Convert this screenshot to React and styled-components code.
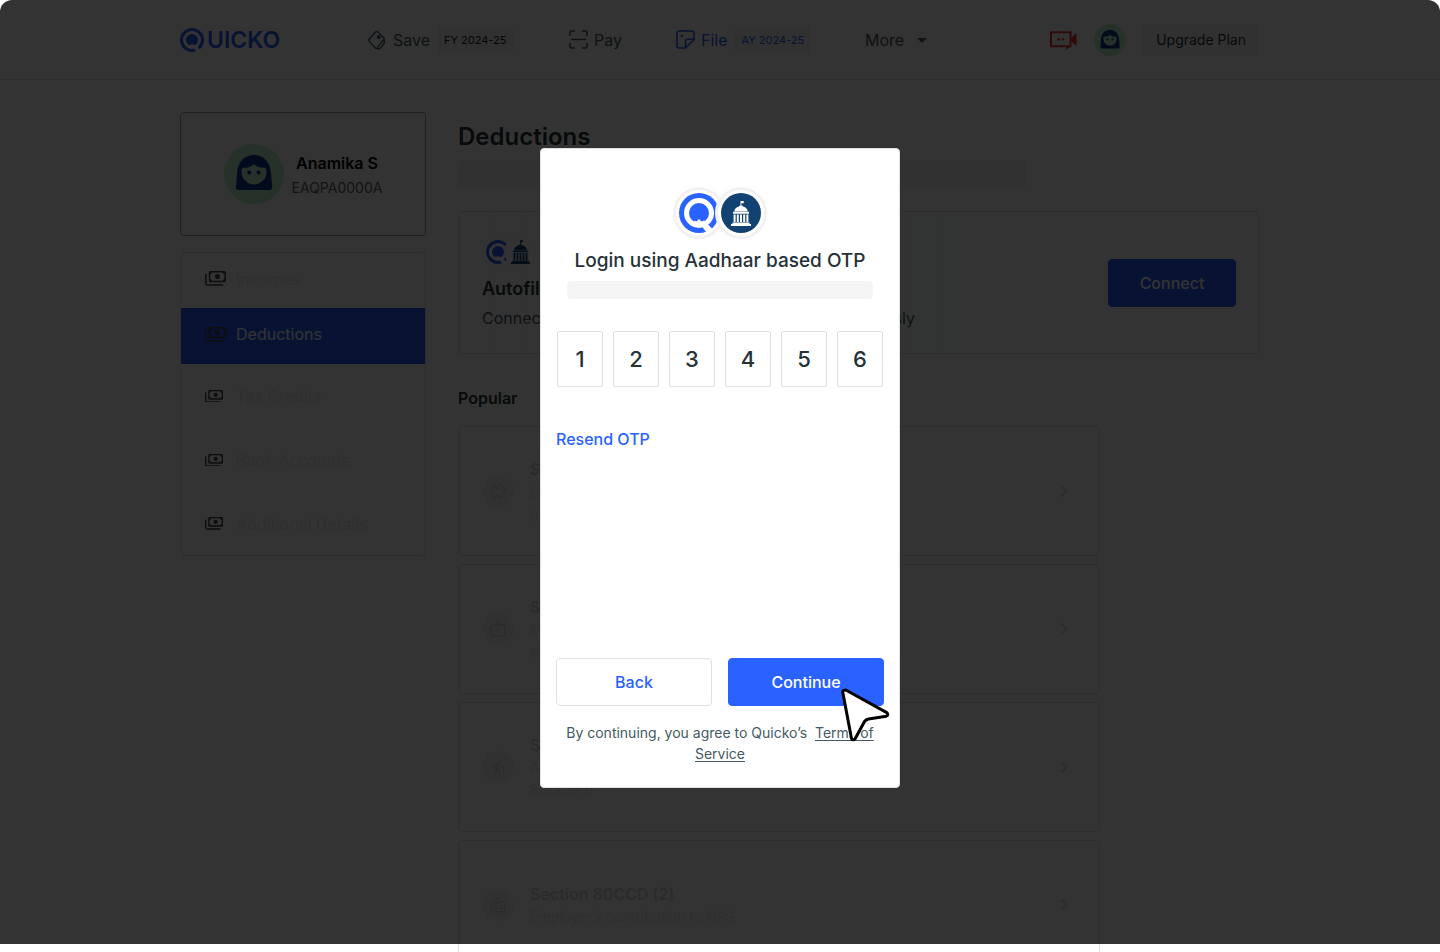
import styled, { createGlobalStyle } from "styled-components";
import {
  MdArrowDropDown,
  MdChevronRight,
  MdElderly,
  MdOutlineBadge,
  MdOutlineMedicalServices,
  MdOutlineSavings,
} from "react-icons/md";

const GlobalStyle = createGlobalStyle`
  *, *::before, *::after {
    box-sizing: border-box;
  }

  body {
    margin: 0;
    height: 100vh;
    overflow: hidden;
    background: #ffffff;
    color: #263238;
    font-family: Inter, "Liberation Sans", sans-serif;
    font-size: 16px;
    line-height: 24px;
  }

  button, input {
    font: inherit;
    margin: 0;
  }

  a {
    color: inherit;
    text-decoration: none;
  }

  h1, h2, h3, p, ul {
    margin: 0;
    padding: 0;
  }

  svg {
    display: block;
    flex-shrink: 0;
  }
`;

/* ---------- header ---------- */

const Header = styled.header`
  height: 80px;
  border-bottom: 1px solid #e0e0e0;
`;

const HeaderInner = styled.div`
  display: flex;
  align-items: center;
  max-width: 1080px;
  height: 100%;
  margin: 0 auto;
`;

const Logo = styled.a`
  display: flex;
  align-items: center;
  gap: 3px;
  width: 187px;
  color: #2962ff;
  font-size: 23px;
  font-weight: 600;
`;

const Nav = styled.nav`
  display: grid;
  grid-template-columns: 202px 107px 189px auto;
  margin-right: auto;
`;

const NavLink = styled.a`
  display: flex;
  align-items: center;
  gap: 6px;
  color: ${({ $active }) => ($active ? "#2962ff" : "#455a64")};
`;

const YearTag = styled.span`
  padding: 0 8px;
  border-radius: 4px;
  background: #f5f5f5;
  color: ${({ $active }) => ($active ? "#2962ff" : "#212121")};
  font-size: 11px;
`;

const HeaderActions = styled.div`
  display: flex;
  align-items: center;
  gap: 16px;
`;

const UpgradeButton = styled.button`
  height: 32px;
  padding: 0 14px;
  border: 0;
  border-radius: 4px;
  background: #f5f5f5;
  color: #263238;
  font-size: 14px;
`;

/* ---------- page ---------- */

const Page = styled.div`
  display: grid;
  grid-template-columns: 246px 1fr;
  align-items: start;
  gap: 32px;
  max-width: 1080px;
  margin: 0 auto;
  padding-top: 32px;
`;

const Sidebar = styled.aside`
  display: grid;
  gap: 16px;
`;

const ProfileCard = styled.section`
  display: flex;
  align-items: center;
  justify-content: center;
  gap: 8px;
  height: 124px;
  border: 1px solid #9e9e9e;
  border-radius: 4px;
  text-align: center;
`;

const ProfileName = styled.p`
  padding-top: 4px;
  color: #000000;
  font-weight: 600;
`;

const ProfilePan = styled.p`
  color: #616161;
  font-size: 14px;
  line-height: 26px;
`;

const Menu = styled.ul`
  border: 1px solid #e0e0e0;
  border-radius: 4px;
  list-style: none;
`;

const MenuLink = styled.a`
  display: flex;
  align-items: center;
  height: ${({ $height }) => $height}px;
  padding: 0 24px;
  padding-bottom: ${({ $height }) => ($height < 60 ? 4 : 0)}px;
  background: ${({ $active }) => ($active ? "#2962ff" : "none")};
  color: ${({ $active }) => ($active ? "#ffffff" : "#ebebeb")};
`;

const MenuIcon = styled.span`
  width: 31px;
  color: #424242;
`;

const PageTitle = styled.h1`
  padding: 8px 0 6px;
  font-size: 24px;
  font-weight: 600;
  line-height: 34px;
`;

const Skeleton = styled.div`
  width: ${({ $width }) => $width};
  height: ${({ $height }) => $height}px;
  border-radius: 4px;
  background: #f5f5f5;
`;

const AutofillCard = styled.section`
  display: flex;
  align-items: center;
  justify-content: space-between;
  height: 143px;
  margin: 24px 0 32px;
  padding: 0 23px;
  border: 1px solid #e0e0e0;
  border-radius: 4px;
  background:
    linear-gradient(90deg, rgba(255, 255, 255, 0.4) 40%, #ffffff 76%),
    repeating-linear-gradient(90deg, transparent 0 31px, #e8eeee 31px 32px),
    linear-gradient(90deg, #ffffff, #effaf6 50%);
`;

const AutofillTitle = styled.h2`
  margin: 9px 0 5px;
  font-size: 18px;
  font-weight: 600;
  line-height: 24px;
`;

const AutofillText = styled.p`
  color: #455a64;
`;

const SectionTitle = styled.h2`
  color: #263238;
  font-size: 16px;
  font-weight: 600;
`;

const SectionList = styled.div`
  display: grid;
  gap: 8px;
  width: 80%;
  margin-top: 16px;
`;

const SectionCard = styled.a`
  display: flex;
  align-items: center;
  gap: 16px;
  height: 130px;
  padding: 0 23px;
  border: 1px solid #e0e0e0;
  border-radius: 4px;
  color: #d5dadc;
`;

const SectionIcon = styled.span`
  display: grid;
  place-items: center;
  width: 32px;
  height: 32px;
  border-radius: 50%;
  background: #f5f5f5;
`;

const SectionText = styled.div`
  width: 320px;
  margin-right: auto;
`;

const SectionName = styled.h3`
  color: #cfd8dc;
  font-size: 16px;
  font-weight: 600;
`;

const SectionHint = styled.p`
  color: #e6e9ea;
  font-size: 14px;
  line-height: 22px;
`;

/* ---------- shared ---------- */

const Button = styled.button`
  flex: ${({ $fill }) => ($fill ? "1" : "0 0 128px")};
  height: 48px;
  border: 1px solid ${({ $outline }) => ($outline ? "#e0e0e0" : "#2962ff")};
  border-radius: 4px;
  background: ${({ $outline }) => ($outline ? "#ffffff" : "#2962ff")};
  color: ${({ $outline }) => ($outline ? "#2962ff" : "#ffffff")};
  font-weight: 500;
`;

const BadgePair = styled.div`
  display: flex;
`;

const Badge = styled.span`
  display: grid;
  place-items: center;
  width: ${({ $size }) => $size}px;
  height: ${({ $size }) => $size}px;
  border: ${({ $ring }) => $ring}px solid #f2f2f2;
  border-radius: 50%;
  background: #ffffff;
  color: #124272;

  & + & {
    margin-left: ${({ $overlap }) => -$overlap}px;
  }
`;

/* ---------- dialog ---------- */

const Backdrop = styled.div`
  position: fixed;
  inset: 0 0 8px;
  display: flex;
  align-items: center;
  justify-content: center;
  padding-bottom: 8px;
  border-radius: 12px 12px 0 0;
  background: rgba(0, 0, 0, 0.8);
`;

const Dialog = styled.section`
  position: relative;
  display: flex;
  flex-direction: column;
  align-items: center;
  width: 360px;
  min-height: 640px;
  padding: 38px 15px 23px;
  border: 1px solid #e0e0e0;
  border-radius: 4px;
  background: #ffffff;
`;

const DialogTitle = styled.h2`
  margin: 8px 0 6px;
  font-size: 19px;
  font-weight: 500;
  line-height: 28px;
`;

const OtpRow = styled.div`
  display: flex;
  gap: 10px;
  width: 100%;
  margin: 32px 0 40px;
  padding: 0 1px;
`;

const OtpInput = styled.input`
  flex: 1;
  min-width: 0;
  height: 56px;
  padding: 0;
  border: 1px solid #e0e0e0;
  border-radius: 2px;
  color: #263238;
  font-size: 22px;
  font-weight: 500;
  text-align: center;
`;

const ResendButton = styled.button`
  align-self: flex-start;
  padding: 0;
  border: 0;
  background: none;
  color: #2962ff;
  font-weight: 500;
`;

const DialogActions = styled.div`
  display: flex;
  gap: 16px;
  width: 100%;
  margin-top: auto;
`;

const Terms = styled.p`
  margin-top: 16px;
  color: #455a64;
  font-size: 14px;
  line-height: 21px;
  text-align: center;

  a {
    text-decoration: underline;
    text-decoration-thickness: 1px;
    text-underline-offset: 2px;
  }
`;

const Pointer = styled.svg`
  position: absolute;
  right: 7px;
  bottom: 43px;
  pointer-events: none;
`;

/* ---------- drawings ---------- */

const QuickoMark = ({ size }) => (
  <svg width={size} height={size} viewBox="0 0 40 40" aria-hidden="true">
    <circle cx="20" cy="20" r="20" fill="#2962ff" />
    <circle cx="20" cy="20" r="12.5" fill="none" stroke="#fff" strokeWidth="5" />
    <path d="M20 26 22.500 28.600 25 27.500 33 35.500 28.500 41 23 33.500 15 31 15.500 27.500 17.500 28.600z" fill="#fff" />
  </svg>
);

const Capitol = ({ width, height }) => (
  <svg width={width} height={height} viewBox="0 0 20 25" fill="currentColor" aria-hidden="true">
    <path d="M9.500 0h3.200v2.200h-2.400v2.200h-.8zM8 5.400A2.200 1.800 0 0 1 12 5.400Q16.300 6.600 16.700 10.400H3.300Q3.700 6.600 8 5.400z" />
    <path d="M2 10.800h16v2H2zM2.600 13.500h2V21h-2zM5.800 13.500h2V21h-2zM9 13.500h2V21H9zM12.200 13.500h2V21h-2zM15.400 13.500h2V21h-2zM1.500 21.500h17V23h-17zM0 23h20v2H0z" />
  </svg>
);

const GovernmentSeal = () => (
  <svg width="40" height="40" viewBox="0 0 40 40" aria-hidden="true">
    <circle cx="20" cy="20" r="20" fill="#124272" />
    <g transform="translate(10 8)" color="#fff">
      <Capitol width="20" height="25" />
    </g>
  </svg>
);

const Avatar = ({ size }) => (
  <svg width={size} height={size} viewBox="0 0 60 60" role="img" aria-label="Anamika S">
    <circle cx="30" cy="30" r="30" fill="#b9f6ca" />
    <path
      d="M12 42.5 13.2 27.5C14 17.5 21 11 30 11s16 6.500 16.800 16.500L48.200 42.500Q48.400 46 45 46H15Q11.800 46 12 42.500z"
      fill="#0a3690"
    />
    <path
      d="M18.500 23.500Q26 24.500 30 20Q34 24.500 41.500 23.500Q42.500 25.500 42.500 28A12.500 12.500 0 0 1 17.500 28Q17.500 25.500 18.500 23.500z"
      fill="#b9f6ca"
    />
    <circle cx="25.200" cy="28.500" r="2" fill="#0a3690" />
    <circle cx="34.600" cy="28.500" r="2" fill="#0a3690" />
  </svg>
);

const SaveIcon = () => (
  <svg width="20" height="20" viewBox="0 0 21 20" fill="none" stroke="currentColor" strokeWidth="1.5" strokeLinejoin="round">
    <path d="M9.200 1.400Q10.200.500 11.200 1.400L17.500 7.600Q18.400 8.500 17.600 9.500L10.800 18.300Q9.800 19.500 8.700 18.400L2.200 11.200Q1.300 10.200 2.200 9.200z" />
    <path d="M18.200 9.800V13.500L13.800 18.600Q12 20 10.300 18.600" />
    <circle cx="12.300" cy="6.900" r="1.300" fill="currentColor" />
  </svg>
);

const PayIcon = () => (
  <svg width="19" height="19" viewBox="0 0 19 19" fill="none" stroke="currentColor" strokeWidth="1.500">
    <path d="M1 6V2.500Q1 1 2.500 1H6M13 1h3.500Q18 1 18 2.500V6M18 13v3.500Q18 18 16.500 18H13M6 18H2.500Q1 18 1 16.500V13M2 9.500h15" />
  </svg>
);

const FileIcon = () => (
  <svg width="19" height="19" viewBox="0 0 19 19" fill="none" stroke="currentColor" strokeWidth="1.600" strokeLinejoin="round">
    <path d="M1 3.500Q1 1 3.500 1h12Q18 1 18 3.500V9.500L9.500 18H3Q1 18 1 16z" />
    <path d="M18 9.300H11.500Q9.500 9.300 9.500 11.300V18" />
    <circle cx="5.800" cy="6" r="1.200" fill="currentColor" stroke="none" />
  </svg>
);

const VideoIcon = () => (
  <svg width="28" height="20" viewBox="0 0 28 20" fill="none" role="img" aria-label="Video call">
    <path d="M1 2.200H20.500V16.200H1z" stroke="#e53935" strokeWidth="2" />
    <path d="M21 8 26.500 3V16L21 11zM16 16H21L16.500 20z" fill="#e53935" />
    <circle cx="8.700" cy="9.300" r="1.200" fill="#e53935" />
    <circle cx="13" cy="9.300" r="1.200" fill="#e53935" />
  </svg>
);

const CashIcon = ({ width }) => (
  <svg width={width} viewBox="0 0 21 15" fill="none" stroke="currentColor" strokeWidth="1.500">
    <path d="M.8 3V12.500Q.8 14 2.300 14H18" />
    <rect x="4.500" y=".8" width="15.700" height="9.700" rx="1" />
    <circle cx="12.400" cy="5.600" r="2.500" fill="currentColor" stroke="none" />
    <path d="M4.500 2.800Q6.200 2.800 6.400.8M18.300.8Q18.500 2.800 20.200 2.800M4.500 8.500Q6.200 8.500 6.400 10.500M18.300 10.500Q18.500 8.500 20.200 8.500" />
  </svg>
);

/* ---------- data ---------- */

const menu = [
  { label: "Incomes", icon: 21, height: 55 },
  { label: "Deductions", icon: 21, height: 56, active: true },
  { label: "Tax Credits", icon: 18, height: 64 },
  { label: "Bank Accounts", icon: 18, height: 64 },
  { label: "Additional Details", icon: 18, height: 63 },
];

const sections = [
  { name: "Section 80C", hint: "LIC, PPF, ELSS, tuition fees, housing loan principal", Icon: MdOutlineSavings },
  { name: "Section 80D", hint: "Medical insurance and other medical expenditure", Icon: MdOutlineMedicalServices },
  { name: "Section 80CCD (1)", hint: "Atal Pension Yojana and National Pension 80CCD(1)", Icon: MdElderly },
  { name: "Section 80CCD (2)", hint: "Employer’s contribution to NPS", Icon: MdOutlineBadge },
];

const otp = ["1", "2", "3", "4", "5", "6"];

const TopBar = () => (
  <Header>
    <HeaderInner>
      <Logo href="#" aria-label="Quicko">
        <QuickoMark size={24} />
        UICKO
      </Logo>
      <Nav>
        <NavLink href="#save">
          <SaveIcon />
          Save <YearTag>FY 2024-25</YearTag>
        </NavLink>
        <NavLink href="#pay">
          <PayIcon />
          Pay
        </NavLink>
        <NavLink href="#file" $active>
          <FileIcon />
          File <YearTag $active>AY 2024-25</YearTag>
        </NavLink>
        <NavLink href="#more">
          More <MdArrowDropDown size={24} />
        </NavLink>
      </Nav>
      <HeaderActions>
        <VideoIcon />
        <Avatar size={32} />
        <UpgradeButton>Upgrade Plan</UpgradeButton>
      </HeaderActions>
    </HeaderInner>
  </Header>
);

const OtpDialog = () => (
  <Backdrop>
    <Dialog role="dialog" aria-modal="true" aria-labelledby="otp-title">
      <BadgePair>
        <Badge $size={52} $ring={3} $overlap={10}>
          <QuickoMark size={40} />
        </Badge>
        <Badge $size={52} $ring={3} $overlap={10}>
          <GovernmentSeal />
        </Badge>
      </BadgePair>
      <DialogTitle id="otp-title">Login using Aadhaar based OTP</DialogTitle>
      <Skeleton $width="306px" $height={18} />
      <OtpRow>
        {otp.map((digit, i) => (
          <OtpInput key={digit} aria-label={`Digit ${i + 1}`} inputMode="numeric" maxLength={1} defaultValue={digit} />
        ))}
      </OtpRow>
      <ResendButton>Resend OTP</ResendButton>
      <DialogActions>
        <Button $fill $outline>
          Back
        </Button>
        <Button $fill>Continue</Button>
      </DialogActions>
      <Terms>
        By continuing, you agree to Quicko’s&nbsp; <a href="#terms">Terms of Service</a>
      </Terms>
      <Pointer width="52" height="58" viewBox="0 0 52 58" aria-hidden="true">
        <path
          d="M6.300 4.300 46.800 26.600Q49 29 46.300 30.200L28.500 33Q26 33.500 24.500 35.500L15 53Q12.800 54.800 11.500 52.500L2.700 6Q3 3.500 6.300 4.300z"
          fill="#fff"
          stroke="#000"
          strokeWidth="3"
          strokeLinejoin="round"
        />
      </Pointer>
    </Dialog>
  </Backdrop>
);

const App = () => (
  <>
    <GlobalStyle />
    <TopBar />
    <Page>
      <Sidebar>
        <ProfileCard>
          <Avatar size={60} />
          <div>
            <ProfileName>Anamika S</ProfileName>
            <ProfilePan>EAQPA0000A</ProfilePan>
          </div>
        </ProfileCard>
        <Menu>
          {menu.map(({ label, icon, height, active }) => (
            <li key={label}>
              <MenuLink href="#" $active={active} $height={height}>
                <MenuIcon>
                  <CashIcon width={icon} />
                </MenuIcon>
                {label}
              </MenuLink>
            </li>
          ))}
        </Menu>
      </Sidebar>
      <main>
        <PageTitle>Deductions</PageTitle>
        <Skeleton $width="71%" $height={27} />
        <AutofillCard>
          <div>
            <BadgePair>
              <Badge $size={32} $ring={1} $overlap={8}>
                <QuickoMark size={24} />
              </Badge>
              <Badge $size={32} $ring={1} $overlap={8}>
                <Capitol width={19} height={24} />
              </Badge>
            </BadgePair>
            <AutofillTitle>Autofill your deductions</AutofillTitle>
            <AutofillText>Connect to your Income Tax Department data seamlessly</AutofillText>
          </div>
          <Button>Connect</Button>
        </AutofillCard>
        <SectionTitle>Popular</SectionTitle>
        <SectionList>
          {sections.map(({ name, hint, Icon }) => (
            <SectionCard key={name} href="#">
              <SectionIcon>
                <Icon size={18} />
              </SectionIcon>
              <SectionText>
                <SectionName>{name}</SectionName>
                <SectionHint>{hint}</SectionHint>
              </SectionText>
              <MdChevronRight size={24} />
            </SectionCard>
          ))}
        </SectionList>
      </main>
    </Page>
    <OtpDialog />
  </>
);

export default App;
